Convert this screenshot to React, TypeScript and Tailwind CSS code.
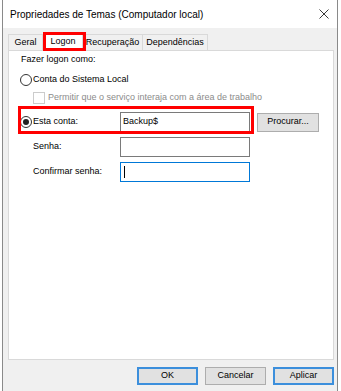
import React from "react";

const font = { fontFamily: '"Segoe UI", "Liberation Sans", Arial, sans-serif' };

const Tab = ({ label, width, selected }: { label: string; width: string; selected?: boolean }) => (
  <div
    className={
      selected
        ? `${width} h-[19px] -mb-px relative z-10 bg-white border border-b-0 border-[#d9d9d9] flex items-center justify-center text-[9px] text-black`
        : `${width} h-[16px] bg-[#f0f0f0] border border-b-0 border-[#d9d9d9] -ml-px flex items-center justify-center text-[9px] text-black`
    }
  >
    {label}
  </div>
);

const TextBox = ({ value, focused }: { value?: string; focused?: boolean }) => (
  <div
    className={`w-[130px] h-[20px] bg-white border ${focused ? "border-[#0078d7]" : "border-[#7a7a7a]"} flex items-center pl-[2px] text-[9px] text-black`}
  >
    {value}
    {focused && <span className="w-px h-[12px] bg-black ml-px"></span>}
  </div>
);

const Button = ({ label, primary }: { label: string; primary?: boolean }) => (
  <div
    className={`w-[61px] h-[18px] bg-[#e1e1e1] flex items-center justify-center text-[9px] text-black ${primary ? "border-2 border-[#3c8fdc]" : "border border-[#adadad]"}`}
  >
    {label}
  </div>
);

export default function App() {
  return (
    <div className="w-[341px] h-[391px] bg-white flex relative overflow-hidden" style={font}>
      {/* Background window peeking through on the left */}
      <div className="w-[2px] h-full bg-white"></div>

      {/* Dialog */}
      <div className="w-[336px] h-full flex flex-col border-x border-[#8a8a8a] bg-[#f0f0f0]">
        {/* Title bar */}
        <div className="h-[28px] bg-white flex items-center justify-between pl-[7px] pr-[7px]">
          <span className="text-[10px] text-black">Propriedades de Temas (Computador local)</span>
          <svg width="10" height="10" viewBox="0 0 10 10" className="mr-[1px]">
            <path d="M0.5 0.5 L9.5 9.5 M9.5 0.5 L0.5 9.5" stroke="#222" strokeWidth="0.9" fill="none" />
          </svg>
        </div>

        {/* Body */}
        <div className="flex-1 flex flex-col pt-[4px] pl-[5px] pr-[3px]">
          {/* Tab strip */}
          <div className="h-[18px] flex items-end pl-[1px]">
            <Tab label="Geral" width="w-[35px]" />
            <Tab label="Logon" width="w-[40px]" selected />
            <Tab label="Recuperação" width="w-[61px]" />
            <Tab label="Dependências" width="w-[66px]" />
          </div>

          {/* Tab panel */}
          <div className="h-[310px] bg-white border border-[#d9d9d9] flex flex-col pl-[11px] pt-[3px] text-[9px] text-black">
            <div className="h-[12px] flex items-center pl-[1px]">Fazer logon como:</div>

            <div className="mt-[7px] h-[13px] flex items-center gap-[1px]">
              <span className="w-[12px] h-[12px] rounded-full border border-[#333] bg-white"></span>
              <span>Conta do Sistema Local</span>
            </div>

            <div className="mt-[6px] h-[12px] flex items-center pl-[13px] gap-[3px]">
              <span className="w-[12px] h-[12px] border border-[#cccccc] bg-white"></span>
              <span className="text-[#8c8c8c]">Permitir que o serviço interaja com a área de trabalho</span>
            </div>

            <div className="mt-[8px] flex items-center">
              <div className="w-[100px] flex items-center gap-[1px]">
                <span className="w-[12px] h-[12px] rounded-full border border-[#333] bg-white flex items-center justify-center">
                  <span className="w-[6px] h-[6px] rounded-full bg-[#222]"></span>
                </span>
                <span>Esta conta:</span>
              </div>
              <TextBox value="Backup$" />
              <div className="ml-[7px] w-[62px] h-[19px] bg-[#e1e1e1] border border-[#adadad] flex items-center justify-center">
                Procurar...
              </div>
            </div>

            <div className="mt-[5px] flex items-center">
              <div className="w-[100px] pl-[13px]">Senha:</div>
              <TextBox />
            </div>

            <div className="mt-[5px] flex items-center">
              <div className="w-[100px] pl-[13px]">Confirmar senha:</div>
              <TextBox focused />
            </div>
          </div>

          {/* Dialog buttons */}
          <div className="mt-[7px] flex justify-end gap-[7px]">
            <Button label="OK" primary />
            <Button label="Cancelar" />
            <Button label="Aplicar" primary />
          </div>
        </div>
      </div>

      {/* Red highlight annotations */}
      <div className="absolute left-[43px] top-[32px] w-[43px] h-[19px] border-[3px] border-[#ff0000] z-20 pointer-events-none"></div>
      <div className="absolute left-[18px] top-[106px] w-[236px] h-[28px] border-[3px] border-[#ff0000] z-20 pointer-events-none"></div>
    </div>
  );
}
